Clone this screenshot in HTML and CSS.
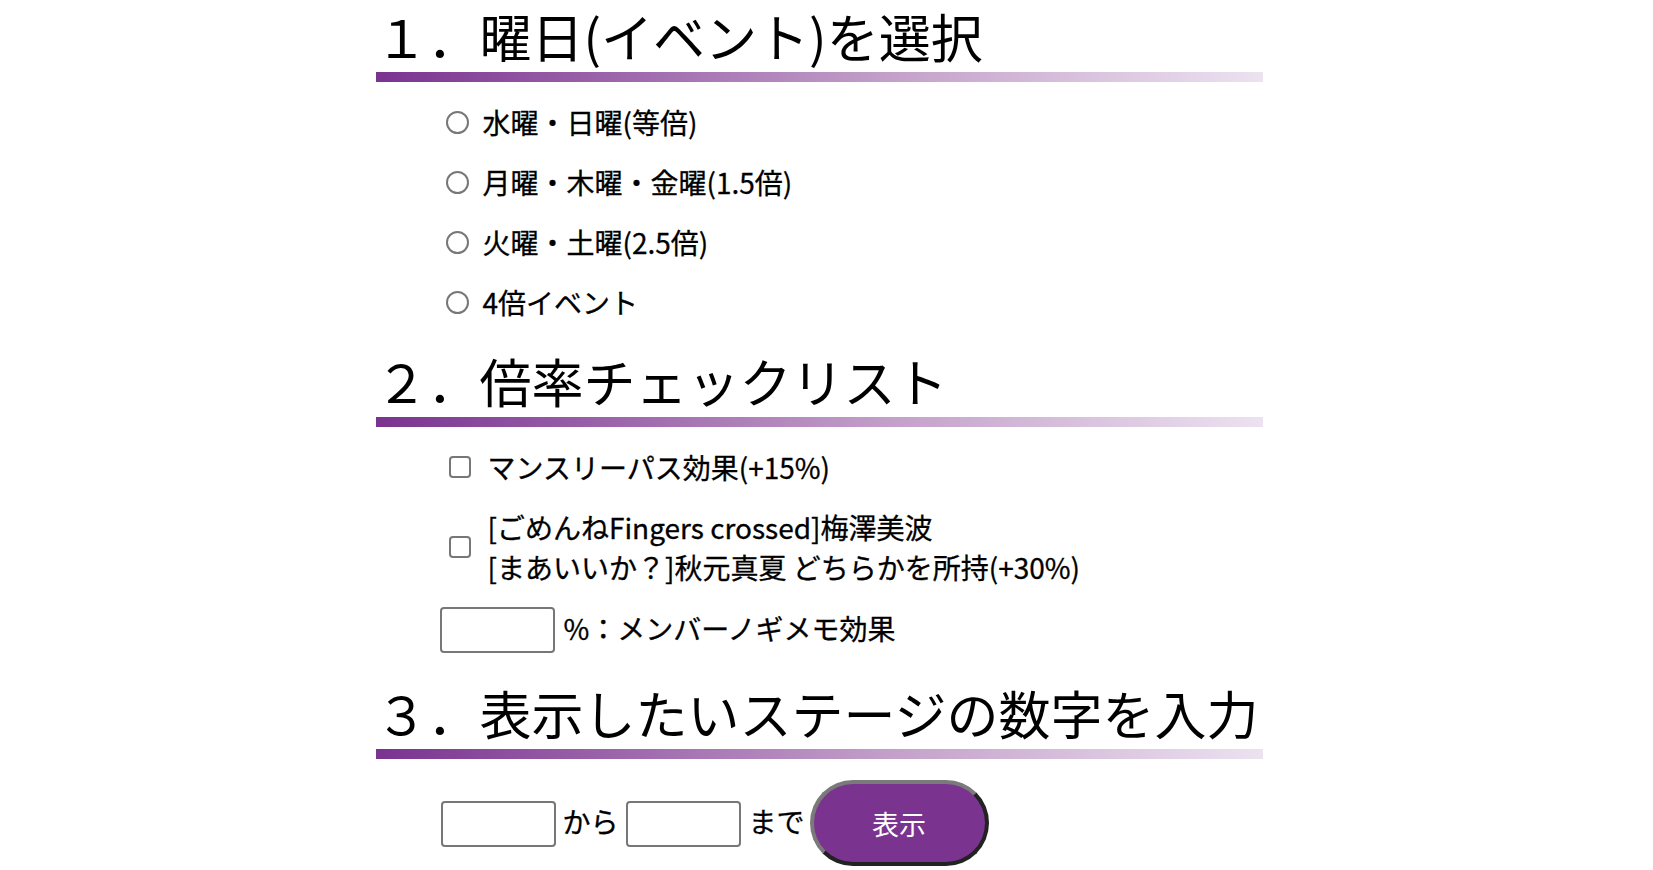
FILE: index.html
```html
<!DOCTYPE html>
<html lang="ja">
<head>
<meta charset="utf-8">
<title>倍率計算</title>
<link rel="stylesheet" href="styles.css">
</head>
<body>
<main class="page">
  <h2 class="section-title">１．曜日(イベント)を選択</h2>
  <div class="radio-list">
    <label class="radio-row"><input type="radio" name="day" class="radio"><span>水曜・日曜(等倍)</span></label>
    <label class="radio-row"><input type="radio" name="day" class="radio"><span>月曜・木曜・金曜(1.5倍)</span></label>
    <label class="radio-row"><input type="radio" name="day" class="radio"><span>火曜・土曜(2.5倍)</span></label>
    <label class="radio-row"><input type="radio" name="day" class="radio"><span>4倍イベント</span></label>
  </div>

  <h2 class="section-title">２．倍率チェックリスト</h2>
  <div class="check-list">
    <label class="check-row single"><input type="checkbox" class="check"><span>マンスリーパス効果(+15%)</span></label>
    <label class="check-row double"><input type="checkbox" class="check"><span>[ごめんねFingers crossed]梅澤美波<br>[まあいいか？]秋元真夏 どちらかを所持(+30%)</span></label>
    <div class="input-row"><input type="text" class="num-input"><span>%：メンバーノギメモ効果</span></div>
  </div>

  <h2 class="section-title">３．表示したいステージの数字を入力</h2>
  <div class="range-row">
    <input type="text" class="num-input">
    <span class="range-label">から</span>
    <input type="text" class="num-input second">
    <span class="range-label until">まで</span>
    <button class="show-btn" type="button">表示</button>
  </div>
</main>
</body>
</html>
```

FILE: styles.css
```css
html, body {
  margin: 0;
  background: #ffffff;
}

body {
  padding-right: 15px;
  font-family: "Noto Sans CJK JP", "Noto Sans", sans-serif;
  color: #000000;
}

.page {
  width: 887px;
  margin: 0 auto;
  padding-top: 4px;
}

.section-title {
  margin: 0;
  font-size: 52px;
  font-weight: 400;
  line-height: 64px;
  white-space: nowrap;
  color: #000000;
  padding-bottom: 14px;
  background: linear-gradient(to right, #7a3390, #c6a3cc 60%, #ece2f0) no-repeat left bottom / 100% 10px;
}

.radio-list {
  display: flex;
  flex-direction: column;
  padding: 10px 0 0 70px;
  margin-bottom: 17px;
}

.radio-row,
.check-row,
.input-row,
.range-row {
  font-size: 28px;
  font-weight: 400;
  -webkit-text-stroke: 0.3px #000000;
}

.radio-row {
  display: flex;
  align-items: center;
  height: 60px;
  gap: 14px;
}

.radio {
  appearance: none;
  -webkit-appearance: none;
  margin: 0;
  width: 23px;
  height: 23px;
  border: 2px solid #777777;
  border-radius: 50%;
  box-sizing: border-box;
  background: #ffffff;
  flex: none;
}

.check-list {
  display: flex;
  flex-direction: column;
  gap: 20px;
  padding: 20px 0 0 64px;
  margin-bottom: 28px;
}

.check-row {
  display: flex;
  align-items: center;
  gap: 17px;
  line-height: 40px;
  padding-left: 9px;
}

.check {
  appearance: none;
  -webkit-appearance: none;
  margin: 0;
  width: 22px;
  height: 22px;
  border: 2px solid #777777;
  border-radius: 4px;
  box-sizing: border-box;
  background: #ffffff;
  flex: none;
}

.input-row {
  display: flex;
  align-items: center;
  gap: 9px;
  height: 46px;
  line-height: 40px;
}

.input-row span {
  position: relative;
  top: -2px;
}

.num-input {
  margin: 0;
  width: 115px;
  height: 46px;
  box-sizing: border-box;
  border: 2px solid #777777;
  border-radius: 4px;
  background: #ffffff;
  font-size: 24px;
  font-family: inherit;
  padding: 0 6px;
  flex: none;
}

.range-row {
  display: flex;
  align-items: center;
  padding: 21px 0 0 65px;
}

.range-row .num-input {
  position: relative;
  top: 1px;
}

.range-label {
  margin: 0 7px;
  position: relative;
  top: -2px;
}

.range-label.until {
  margin: 0 5px 0 8px;
}

.show-btn {
  width: 179px;
  height: 86px;
  box-sizing: border-box;
  border-radius: 43px;
  border: 4px solid;
  border-color: #7a7a7a #222222 #222222 #7a7a7a;
  background: #7b3390;
  color: #ffffff;
  -webkit-text-stroke: 0;
  font-family: inherit;
  font-size: 27px;
  font-weight: 400;
  margin: 0;
  padding: 0;
}
```
